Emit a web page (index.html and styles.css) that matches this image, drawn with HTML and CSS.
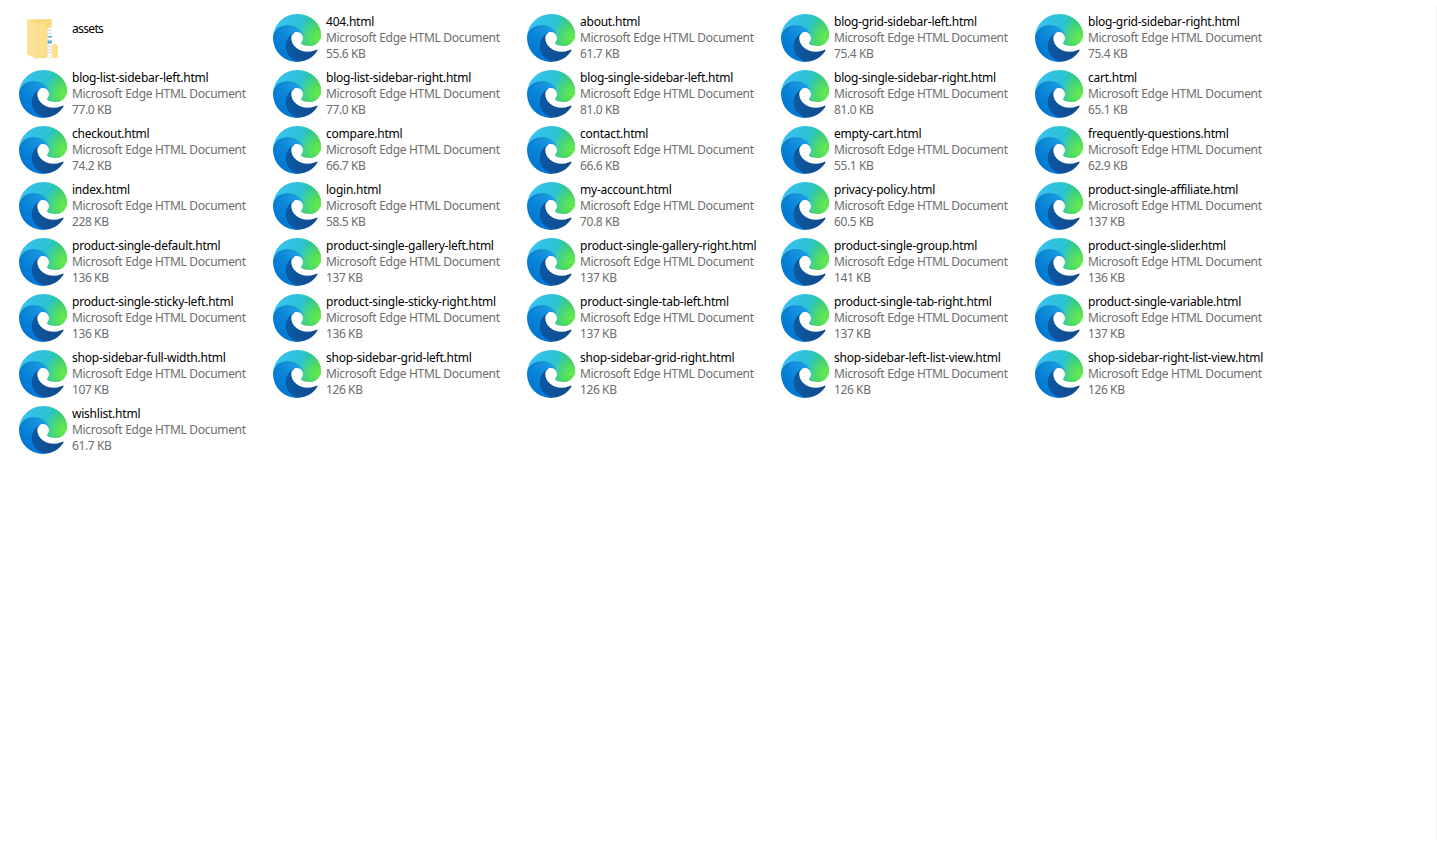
FILE: index.html
```
<!DOCTYPE html>
<html lang="en">
<head>
<meta charset="utf-8">
<title>Files</title>
<link rel="stylesheet" href="styles.css">
</head>
<body>
<svg class="defs" aria-hidden="true">
<defs>
<linearGradient id="deep" gradientUnits="userSpaceOnUse" x1="63" y1="177" x2="241" y2="177"><stop offset="0" stop-color="#0c59a4"/><stop offset="1" stop-color="#114a8b"/></linearGradient>
<linearGradient id="blue" gradientUnits="userSpaceOnUse" x1="152.9" y1="100" x2="46" y2="216"><stop offset="0" stop-color="#1b9de2"/><stop offset=".16" stop-color="#1595df"/><stop offset=".67" stop-color="#0680d7"/><stop offset="1" stop-color="#0078d4"/></linearGradient>
<radialGradient id="blueShade" gradientUnits="userSpaceOnUse" cx="88" cy="164" r="130"><stop offset=".7" stop-opacity="0"/><stop offset="1" stop-opacity=".3"/></radialGradient>
<radialGradient id="teal" gradientUnits="userSpaceOnUse" cx="25.8" cy="47.2" r="300"><stop offset="0" stop-color="#35c1f1"/><stop offset=".11" stop-color="#34c1ed"/><stop offset=".27" stop-color="#2fc2df"/><stop offset=".43" stop-color="#2bc3d2"/><stop offset=".82" stop-color="#36c752"/></radialGradient>
<radialGradient id="green" gradientUnits="userSpaceOnUse" cx="240" cy="128" r="112"><stop offset="0" stop-color="#66eb4e"/><stop offset="1" stop-color="#66eb4e" stop-opacity="0"/></radialGradient>
<linearGradient id="leaf"><stop offset="0" stop-color="#fbe499"/><stop offset="1" stop-color="#fddf81"/></linearGradient>
</defs>
<symbol id="edge" viewBox="0 0 256 256">
<path fill="url(#deep)" d="M231.07 190.54c-3.38 1.76-6.86 3.33-10.43 4.69a101.15 101.15 0 0 1-35.57 6.39c-46.88 0-87.72-32.25-87.72-73.64.13-11.3 6.4-21.65 16.35-27-42.4 1.78-53.3 45.97-53.3 71.85 0 73.2 67.47 80.62 82 80.62 7.84 0 19.66-2.28 26.76-4.52l1.3-.44a128.34 128.34 0 0 0 66.6-52.8 4 4 0 0 0-5.99-5.15z"/>
<path fill="url(#blue)" d="M105.73 241.42a79.2 79.2 0 0 1-22.74-21.34 80.72 80.72 0 0 1 29.53-120c3.13-1.47 8.47-4.13 15.58-4a32.4 32.4 0 0 1 25.69 13 31.88 31.88 0 0 1 6.36 18.66c0-.2 24.51-79.67-80.17-79.67C35.98 48.07 0 89.83 0 126.46a130.6 130.6 0 0 0 12.1 56 128 128 0 0 0 156.37 67.03 75.52 75.52 0 0 1-62.74-8.07z"/>
<path fill="url(#blueShade)" d="M105.73 241.42a79.2 79.2 0 0 1-22.74-21.34 80.72 80.72 0 0 1 29.53-120c3.13-1.47 8.47-4.13 15.58-4a32.4 32.4 0 0 1 25.69 13 31.88 31.88 0 0 1 6.36 18.66c0-.2 24.51-79.67-80.17-79.67C35.98 48.07 0 89.83 0 126.46a130.6 130.6 0 0 0 12.1 56 128 128 0 0 0 156.37 67.03 75.52 75.52 0 0 1-62.74-8.07z"/>
<path fill="url(#teal)" d="M152.31 148.86c-.81 1.05-3.3 2.5-3.3 5.66 0 2.61 1.7 5.12 4.72 7.23 14.38 10 41.49 8.68 41.56 8.68a59.56 59.56 0 0 0 30.27-8.35A61.38 61.38 0 0 0 256 109.2c.26-22.41-8-37.31-11.34-43.91C223.46 23.84 177.72 0 128 0A128 128 0 0 0 0 126.2c.48-36.54 36.8-66.05 80-66.05 3.5 0 23.46.34 42 10.07 16.34 8.58 24.9 18.94 30.85 29.21 6.18 10.67 7.28 24.15 7.28 29.52s-2.74 13.33-7.8 19.91z"/>
<path fill="url(#green)" d="M152.31 148.86c-.81 1.05-3.3 2.5-3.3 5.66 0 2.61 1.7 5.12 4.72 7.23 14.38 10 41.49 8.68 41.56 8.68a59.56 59.56 0 0 0 30.27-8.35A61.38 61.38 0 0 0 256 109.2c.26-22.41-8-37.31-11.34-43.91C223.46 23.84 177.72 0 128 0A128 128 0 0 0 0 126.2c.48-36.54 36.8-66.05 80-66.05 3.5 0 23.46.34 42 10.07 16.34 8.58 24.9 18.94 30.85 29.21 6.18 10.67 7.28 24.15 7.28 29.52s-2.74 13.33-7.8 19.91z"/>
</symbol>
</svg>
<main class="files">
<div class="file folder"><svg class="icon" viewBox="0 0 48 48"><path fill="#f7d97c" d="M8.500 5.500 31 5q1.700 0 1.700 2v23.500H37l2 1.500v11l-1.500 1H20z"/><path fill="#f5f7f8" d="m27 14.500 6-1.800v30.800l-6 .5z"/><path fill="#d3dbe0" d="M28 16h4v1h-4zm0 3h4v1h-4zm0 13h5v1h-5zm0 3h5v1h-5zm0 3h5v1h-5z"/><path fill="#5aaed6" d="M28.500 22H33v1.500h-4.500zm0 4.500H33V29l-4.500 1z"/><path fill="#fde18a" d="M33 31.500 34.500 30.500H37l2 1.500v11l-1.500 1H33z"/><path fill="url(#leaf)" d="m17 10 9.300-2.500q1.500 0 1.500 1.500v34.500l-8.600.5-2-2z"/><path fill="#fce297" d="m8 5.500 10 4.300q1.200.7 1.200 2V44.500q0 1.300-1.400.8L8 40.500z"/><path fill="none" stroke="#f0cb68" stroke-width=".5" d="M19.300 11v33M27.900 9v34"/></svg><div class="text"><div class="name">assets</div></div></div>
<div class="file"><svg class="icon"><use href="#edge"/></svg><div class="text"><div class="name">404.html</div><div class="type">Microsoft Edge HTML Document</div><div class="size">55.6 KB</div></div></div>
<div class="file"><svg class="icon"><use href="#edge"/></svg><div class="text"><div class="name">about.html</div><div class="type">Microsoft Edge HTML Document</div><div class="size">61.7 KB</div></div></div>
<div class="file"><svg class="icon"><use href="#edge"/></svg><div class="text"><div class="name">blog-grid-sidebar-left.html</div><div class="type">Microsoft Edge HTML Document</div><div class="size">75.4 KB</div></div></div>
<div class="file"><svg class="icon"><use href="#edge"/></svg><div class="text"><div class="name">blog-grid-sidebar-right.html</div><div class="type">Microsoft Edge HTML Document</div><div class="size">75.4 KB</div></div></div>
<div class="file"><svg class="icon"><use href="#edge"/></svg><div class="text"><div class="name">blog-list-sidebar-left.html</div><div class="type">Microsoft Edge HTML Document</div><div class="size">77.0 KB</div></div></div>
<div class="file"><svg class="icon"><use href="#edge"/></svg><div class="text"><div class="name">blog-list-sidebar-right.html</div><div class="type">Microsoft Edge HTML Document</div><div class="size">77.0 KB</div></div></div>
<div class="file"><svg class="icon"><use href="#edge"/></svg><div class="text"><div class="name">blog-single-sidebar-left.html</div><div class="type">Microsoft Edge HTML Document</div><div class="size">81.0 KB</div></div></div>
<div class="file"><svg class="icon"><use href="#edge"/></svg><div class="text"><div class="name">blog-single-sidebar-right.html</div><div class="type">Microsoft Edge HTML Document</div><div class="size">81.0 KB</div></div></div>
<div class="file"><svg class="icon"><use href="#edge"/></svg><div class="text"><div class="name">cart.html</div><div class="type">Microsoft Edge HTML Document</div><div class="size">65.1 KB</div></div></div>
<div class="file"><svg class="icon"><use href="#edge"/></svg><div class="text"><div class="name">checkout.html</div><div class="type">Microsoft Edge HTML Document</div><div class="size">74.2 KB</div></div></div>
<div class="file"><svg class="icon"><use href="#edge"/></svg><div class="text"><div class="name">compare.html</div><div class="type">Microsoft Edge HTML Document</div><div class="size">66.7 KB</div></div></div>
<div class="file"><svg class="icon"><use href="#edge"/></svg><div class="text"><div class="name">contact.html</div><div class="type">Microsoft Edge HTML Document</div><div class="size">66.6 KB</div></div></div>
<div class="file"><svg class="icon"><use href="#edge"/></svg><div class="text"><div class="name">empty-cart.html</div><div class="type">Microsoft Edge HTML Document</div><div class="size">55.1 KB</div></div></div>
<div class="file"><svg class="icon"><use href="#edge"/></svg><div class="text"><div class="name">frequently-questions.html</div><div class="type">Microsoft Edge HTML Document</div><div class="size">62.9 KB</div></div></div>
<div class="file"><svg class="icon"><use href="#edge"/></svg><div class="text"><div class="name">index.html</div><div class="type">Microsoft Edge HTML Document</div><div class="size">228 KB</div></div></div>
<div class="file"><svg class="icon"><use href="#edge"/></svg><div class="text"><div class="name">login.html</div><div class="type">Microsoft Edge HTML Document</div><div class="size">58.5 KB</div></div></div>
<div class="file"><svg class="icon"><use href="#edge"/></svg><div class="text"><div class="name">my-account.html</div><div class="type">Microsoft Edge HTML Document</div><div class="size">70.8 KB</div></div></div>
<div class="file"><svg class="icon"><use href="#edge"/></svg><div class="text"><div class="name">privacy-policy.html</div><div class="type">Microsoft Edge HTML Document</div><div class="size">60.5 KB</div></div></div>
<div class="file"><svg class="icon"><use href="#edge"/></svg><div class="text"><div class="name">product-single-affiliate.html</div><div class="type">Microsoft Edge HTML Document</div><div class="size">137 KB</div></div></div>
<div class="file"><svg class="icon"><use href="#edge"/></svg><div class="text"><div class="name">product-single-default.html</div><div class="type">Microsoft Edge HTML Document</div><div class="size">136 KB</div></div></div>
<div class="file"><svg class="icon"><use href="#edge"/></svg><div class="text"><div class="name">product-single-gallery-left.html</div><div class="type">Microsoft Edge HTML Document</div><div class="size">137 KB</div></div></div>
<div class="file"><svg class="icon"><use href="#edge"/></svg><div class="text"><div class="name">product-single-gallery-right.html</div><div class="type">Microsoft Edge HTML Document</div><div class="size">137 KB</div></div></div>
<div class="file"><svg class="icon"><use href="#edge"/></svg><div class="text"><div class="name">product-single-group.html</div><div class="type">Microsoft Edge HTML Document</div><div class="size">141 KB</div></div></div>
<div class="file"><svg class="icon"><use href="#edge"/></svg><div class="text"><div class="name">product-single-slider.html</div><div class="type">Microsoft Edge HTML Document</div><div class="size">136 KB</div></div></div>
<div class="file"><svg class="icon"><use href="#edge"/></svg><div class="text"><div class="name">product-single-sticky-left.html</div><div class="type">Microsoft Edge HTML Document</div><div class="size">136 KB</div></div></div>
<div class="file"><svg class="icon"><use href="#edge"/></svg><div class="text"><div class="name">product-single-sticky-right.html</div><div class="type">Microsoft Edge HTML Document</div><div class="size">136 KB</div></div></div>
<div class="file"><svg class="icon"><use href="#edge"/></svg><div class="text"><div class="name">product-single-tab-left.html</div><div class="type">Microsoft Edge HTML Document</div><div class="size">137 KB</div></div></div>
<div class="file"><svg class="icon"><use href="#edge"/></svg><div class="text"><div class="name">product-single-tab-right.html</div><div class="type">Microsoft Edge HTML Document</div><div class="size">137 KB</div></div></div>
<div class="file"><svg class="icon"><use href="#edge"/></svg><div class="text"><div class="name">product-single-variable.html</div><div class="type">Microsoft Edge HTML Document</div><div class="size">137 KB</div></div></div>
<div class="file"><svg class="icon"><use href="#edge"/></svg><div class="text"><div class="name">shop-sidebar-full-width.html</div><div class="type">Microsoft Edge HTML Document</div><div class="size">107 KB</div></div></div>
<div class="file"><svg class="icon"><use href="#edge"/></svg><div class="text"><div class="name">shop-sidebar-grid-left.html</div><div class="type">Microsoft Edge HTML Document</div><div class="size">126 KB</div></div></div>
<div class="file"><svg class="icon"><use href="#edge"/></svg><div class="text"><div class="name">shop-sidebar-grid-right.html</div><div class="type">Microsoft Edge HTML Document</div><div class="size">126 KB</div></div></div>
<div class="file"><svg class="icon"><use href="#edge"/></svg><div class="text"><div class="name">shop-sidebar-left-list-view.html</div><div class="type">Microsoft Edge HTML Document</div><div class="size">126 KB</div></div></div>
<div class="file"><svg class="icon"><use href="#edge"/></svg><div class="text"><div class="name">shop-sidebar-right-list-view.html</div><div class="type">Microsoft Edge HTML Document</div><div class="size">126 KB</div></div></div>
<div class="file"><svg class="icon"><use href="#edge"/></svg><div class="text"><div class="name">wishlist.html</div><div class="type">Microsoft Edge HTML Document</div><div class="size">61.7 KB</div></div></div>
</main>
</body>
</html>
```
FILE: styles.css
```
body {
  margin: 0;
  padding-top: 6px;
  height: 858px;
  box-sizing: border-box;
  background: #fff;
  font: 12px/16px "Segoe UI", "Noto Sans", sans-serif;
  color: #6d6d6d;
  overflow: hidden;
}
.defs {
  position: absolute;
  width: 0;
  height: 0;
}
.files {
  display: grid;
  grid-template-columns: repeat(5, 254px);
  grid-auto-rows: 56px;
  align-content: start;
  box-sizing: border-box;
  height: 834px;
  padding: 8px 0 0 19px;
  border-right: 1px solid #f5f5f5;
}
.file {
  display: flex;
  gap: 5px;
}
.icon {
  width: 48px;
  height: 48px;
  flex: none;
}
.text {
  white-space: nowrap;
}
.name {
  color: #000;
  letter-spacing: -0.23px;
}
.type {
  letter-spacing: -0.31px;
}
.size {
  letter-spacing: -0.4px;
}
.folder .text {
  padding-top: 7px;
}
.folder .name {
  letter-spacing: -0.65px;
}
```
